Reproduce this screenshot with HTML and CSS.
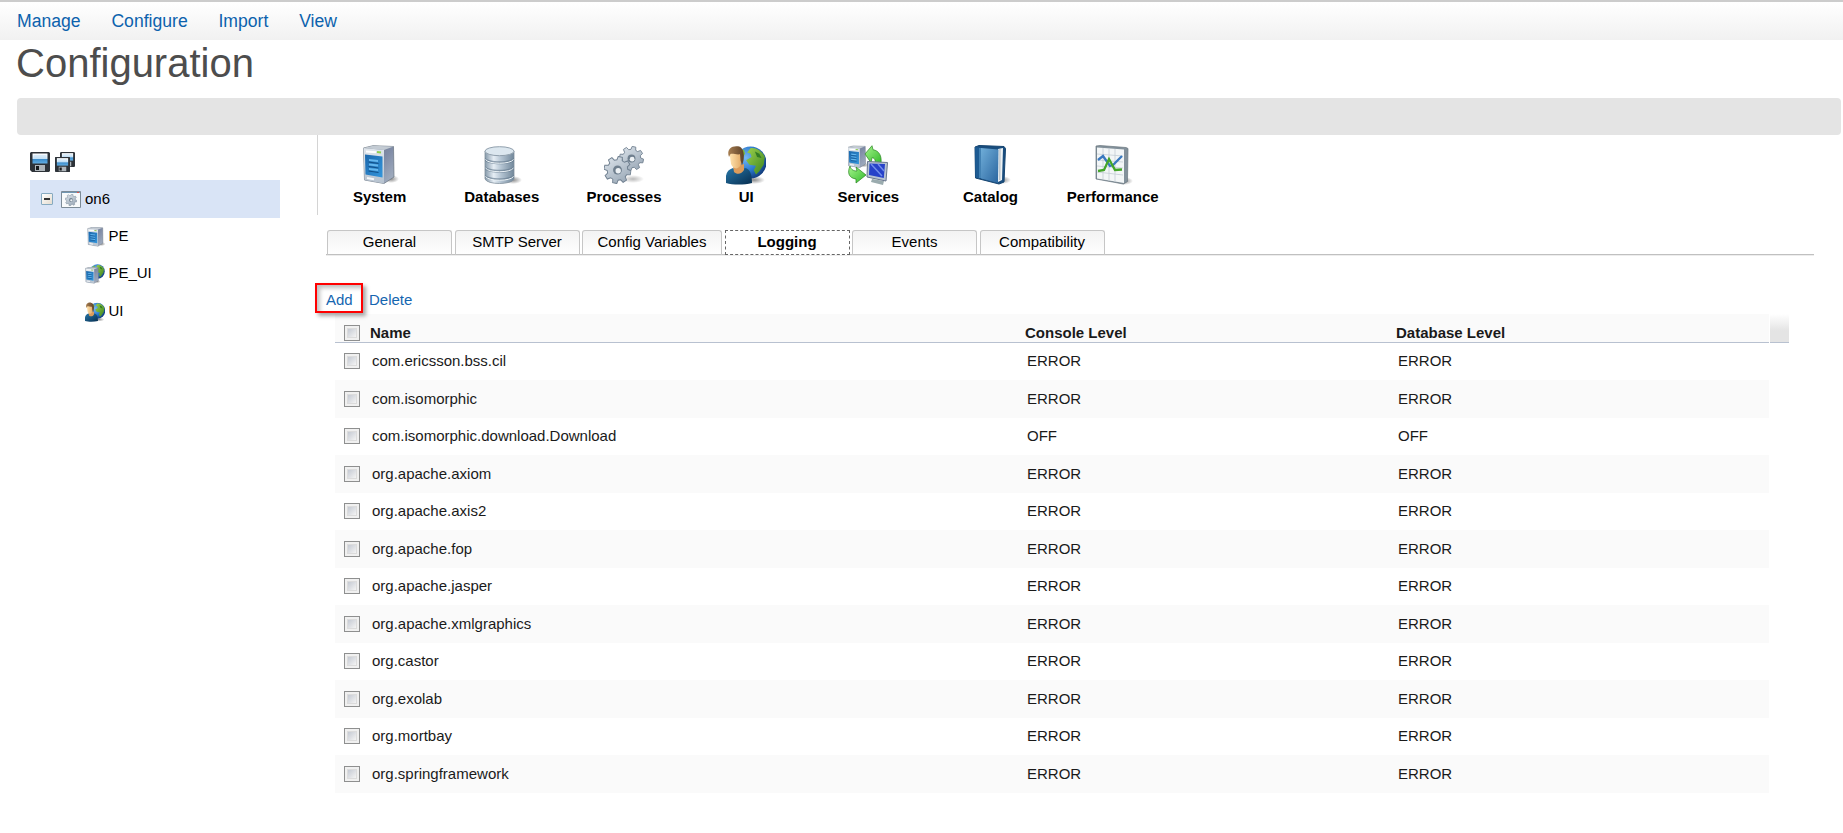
FILE: index.html
```html
<!DOCTYPE html>
<html lang="en">
<head>
<meta charset="utf-8">
<title>Configuration</title>
<link rel="stylesheet" href="styles.css">
</head>
<body>
<svg class="defs" width="0" height="0" aria-hidden="true">
  <defs>
    <linearGradient id="gSide" x1="0" y1="0" x2="1" y2="1"><stop offset="0" stop-color="#6d7887"/><stop offset=".5" stop-color="#7f8ba6"/><stop offset="1" stop-color="#a8b4c4"/></linearGradient>
    <linearGradient id="gFront" x1="0" y1="0" x2="0" y2="1"><stop offset="0" stop-color="#e0e6ec"/><stop offset="1" stop-color="#b6c2cf"/></linearGradient>
    <linearGradient id="gBlue" x1="0" y1="0" x2="1" y2="1"><stop offset="0" stop-color="#1a67ac"/><stop offset="1" stop-color="#3496dc"/></linearGradient>
    <linearGradient id="gDb" x1="0" y1="0" x2="1" y2="0"><stop offset="0" stop-color="#8599aa"/><stop offset=".3" stop-color="#e6eef5"/><stop offset=".55" stop-color="#b5c5d3"/><stop offset="1" stop-color="#71879a"/></linearGradient>
    <linearGradient id="gGear" x1="0" y1="0" x2="1" y2="1"><stop offset="0" stop-color="#dfe6ed"/><stop offset="1" stop-color="#93a2b1"/></linearGradient>
    <radialGradient id="gGlobe" cx=".35" cy=".35" r=".7"><stop offset="0" stop-color="#78b9f4"/><stop offset=".6" stop-color="#2a78cc"/><stop offset="1" stop-color="#123d7d"/></radialGradient>
    <linearGradient id="gLeaf" x1="0" y1="0" x2="1" y2="1"><stop offset="0" stop-color="#9cd14b"/><stop offset="1" stop-color="#3c8420"/></linearGradient>
    <linearGradient id="gFace" x1="0" y1="0" x2="1" y2="0"><stop offset="0" stop-color="#ffe4b0"/><stop offset="1" stop-color="#e3a964"/></linearGradient>
    <linearGradient id="gHair" x1="0" y1="0" x2="1" y2="0"><stop offset="0" stop-color="#a67d50"/><stop offset="1" stop-color="#5d4128"/></linearGradient>
    <linearGradient id="gShirt" x1="0" y1="0" x2="1" y2="1"><stop offset="0" stop-color="#2877a8"/><stop offset="1" stop-color="#062e50"/></linearGradient>
    <linearGradient id="gBook" x1="0" y1="0" x2="1" y2="1"><stop offset="0" stop-color="#6fadd8"/><stop offset="1" stop-color="#2a659f"/></linearGradient>
    <linearGradient id="gArrow" x1="0" y1="0" x2="1" y2="1"><stop offset="0" stop-color="#a5f58c"/><stop offset="1" stop-color="#33b92a"/></linearGradient>
    <linearGradient id="gLabel" x1="0" y1="0" x2="0" y2="1"><stop offset="0" stop-color="#fff"/><stop offset=".55" stop-color="#c9e3f7"/><stop offset=".6" stop-color="#3d8dcb"/><stop offset="1" stop-color="#63aee3"/></linearGradient>
    <radialGradient id="gShade"><stop offset="0" stop-color="#000" stop-opacity=".45"/><stop offset="1" stop-color="#000" stop-opacity="0"/></radialGradient>

    <symbol id="server" viewBox="0 0 40 40">
      <ellipse cx="31" cy="34" rx="8" ry="4" fill="url(#gShade)"/>
      <path d="M3.500 3 13 .7 33.500 1.500 34 32 24 38.500 4.500 35Z" fill="url(#gSide)" stroke="#65717d" stroke-width=".7"/>
      <path d="M3.500 3 24 5 33.500 1.500 13 .7Z" fill="#c3cbd3"/>
      <path d="M3.500 3 24 5V38.500L4.500 35Z" fill="url(#gFront)"/>
      <path d="M5 9.500 22.500 11.500V32.500L5.500 29.500Z" fill="url(#gBlue)"/>
      <path d="M9 14 18 15v2L9 16M9 18.500l9 1v2l-9-1M9 23l9 1v2l-9-1" fill="#65b7ee"/>
      <path d="M8.500 17 18.500 18.500M8.500 21.500 18.500 23M8.500 26 18.500 27.500" stroke="#114f88"/>
      <path d="m6 6.500 10 .8" stroke="#fff" stroke-width="2"/><path d="m17 7 4 .4" stroke="#8fd050" stroke-width="2"/>
      <path d="M7 33l7 1.200" stroke="#f5f8fa" stroke-width="2"/>
    </symbol>
    <symbol id="database" viewBox="0 0 40 40">
      <ellipse cx="31" cy="35" rx="9" ry="4" fill="url(#gShade)"/>
      <path d="M3 6v28c2 6 27 6 29 0V6Z" fill="url(#gDb)" stroke="#81909d" stroke-width=".8"/>
      <path d="M3 12.500c3 5 26 5 29 0v3c-3 5-26 5-29 0ZM3 21c3 5 26 5 29 0v3c-3 5-26 5-29 0ZM3 29.500c3 5 26 5 29 0v2c-3 5-26 5-29 0Z" fill="#64798d" opacity=".65"/>
      <path d="M3.500 14.500c3 5 25 5 28 0M3.500 23c3 5 25 5 28 0M3.500 31.500c3 5 25 5 28 0" fill="none" stroke="#edf4f8" stroke-width="1"/>
      <ellipse cx="17.500" cy="6.200" rx="14.500" ry="4.500" fill="#dce7ef" stroke="#91a0ad"/>
    </symbol>
    <symbol id="gear" viewBox="-12 -12 24 24">
      <g fill="url(#gGear)" stroke="#6f7f8f" stroke-width=".8">
        <path d="M-2.300-8.500-1.800-11.500H1.800L2.300-8.500 4.400-7.700 6.900-9.400 9.400-6.900 7.700-4.400 8.500-2.300 11.500-1.800V1.800L8.500 2.300 7.700 4.400 9.400 6.900 6.900 9.400 4.400 7.700 2.300 8.500 1.800 11.500H-1.800L-2.300 8.500-4.400 7.700-6.900 9.400-9.400 6.900-7.700 4.400-8.500 2.300-11.500 1.800V-1.800L-8.500-2.300-7.700-4.400-9.400-6.900-6.900-9.400-4.400-7.700Z" transform="rotate(12)"/>
      </g>
      <circle r="3.800" fill="#6f7f8e"/><circle cx=".6" cy=".6" r="2.300" fill="#eef2f5"/>
    </symbol>
    <symbol id="gears" viewBox="0 0 40 40">
      <ellipse cx="29" cy="34" rx="11" ry="4" fill="url(#gShade)" opacity=".6"/>
      <use href="#gear" x="15" y="1" width="25" height="25"/>
      <use href="#gear" x="-.5" y="11" width="28" height="28"/>
    </symbol>
    <symbol id="globe" viewBox="0 0 30 30">
      <circle cx="15" cy="15" r="14.500" fill="url(#gGlobe)"/>
      <path d="M15 2c5-1 11 3 13 8l-1 7-4 6-3 3-2-4 2-4-6-1-3-4 5-3-1-3-3-1Z" fill="url(#gLeaf)"/>
      <path d="M3 7 9 3l1 4-3 5-4 1Z" fill="#7dbb3c"/>
      <path d="m19 5 4 2 2 4-4-1Z" fill="#327b25"/>
    </symbol>
    <symbol id="user" viewBox="0 0 40 40">
      <ellipse cx="28" cy="35" rx="11" ry="4" fill="url(#gShade)"/>
      <use href="#globe" x="8" y="1" width="33" height="33"/>
      <path d="M0 38c-1-9 1-13 7-15l6 4 6-4c5 1 7 6 7 15-8 2-19 2-26 0Z" fill="url(#gShirt)"/>
      <path d="m7 21 1 6c3 3 8 2 10-2v-6Z" fill="#dc9c5b"/>
      <path d="M3.500 8c1-7 12-8 12.500-1l-.5 11c-2 7-8 7-10.500 1Z" fill="url(#gFace)"/>
      <path d="M3 12C0 3 7 .5 12 1.300c7 1 7 13 4 19l-1.500-5-.500-6C10 10 7 8 4.500 9Z" fill="url(#gHair)"/>
    </symbol>
    <symbol id="serverglobe" viewBox="0 0 40 40">
      <use href="#globe" x="10" y="0" width="30" height="30"/>
      <use href="#server" x="-2" y="6" width="34" height="34"/>
    </symbol>
    <symbol id="services" viewBox="0 0 40 40">
      <use href="#server" x="-2" y="0" width="23" height="24"/>
      <path d="M17 9 24 .7l1 4c6 1 9 6 8 14h-6c1-4-1-6-3-6l-1 5Z" fill="url(#gArrow)" stroke="#27841e" stroke-width=".7"/>
      <path d="M2 21c1 4 4 5 7 5l-1-4 10 8-10 8v-4c-7-1-9-6-6-13Z" fill="url(#gArrow)" stroke="#27841e" stroke-width=".7"/>
      <path d="m24 34 12 2-1 4-12-3Z" fill="#9aabae"/><path d="M19.500 16.500 39.500 17.500 38 36 19 32Z" fill="#b7c3d3" stroke="#68768c"/>
      <path d="m21.500 18.500 15.500.4-1.200 14L21 30Z" fill="#2742c9"/><path d="m23 19 11 12M30 19l6 7" stroke="#718dea" stroke-width="1.500"/>
    </symbol>
    <symbol id="book" viewBox="-1 0 40 40">
      <ellipse cx="30" cy="35" rx="9" ry="4" fill="url(#gShade)"/>
      <path d="m3 2 4-1.500 25 1 1.500 2L32 37l-5 2-23.500-6Z" fill="#194d7e" stroke="#164571"/>
      <path d="m26 4 5-1-1 32-4 2Z" fill="#eef3f5"/><path d="m28 4-.2 31" stroke="#a7b0b8"/>
      <path d="M9 3 26.500 4.500 26 38 9 33.500Z" fill="url(#gBook)"/>
      <path d="m3 2 6 1v30.500l-5.500-1Z" fill="#1d5b93"/><path d="M8 3v30" stroke="#68a8d3"/>
    </symbol>
    <symbol id="chart" viewBox="0 0 40 40">
      <ellipse cx="31" cy="36" rx="9" ry="4" fill="url(#gShade)"/>
      <path d="m3 1 4-.5 26 2 2 1-.5 33-4 2.500L3 34Z" fill="#83919b" stroke="#68757e" stroke-width=".7"/>
      <path d="m4 2.500 27 2V38L4 33.500Z" fill="#f3f6f7"/>
      <path d="m10 3v31M16 3.500V36M22 4v33M4 9l26 2M4 15l26 2M4 21l26 2M4 27l26 3" stroke="#c3cdd4" stroke-width=".8"/>
      <path d="m5 15 5-4 7 10 3-1 9-9" fill="none" stroke="#3978bf" stroke-width="2.300"/>
      <path d="m5 26 6-1 5-11 6 11 7-.5" fill="none" stroke="#44a528" stroke-width="2.300"/>
    </symbol>
    <symbol id="disk" viewBox="0 0 20 20">
      <path d="M1 0h18l1 1v18l-1 1H2l-2-2V1Z" fill="#2d3238"/>
      <path d="M2.500 1.500h15v10h-15Z" fill="url(#gLabel)"/><path d="M4 4h12M4 6h12" stroke="#b6d9f2" stroke-width=".7"/>
      <path d="M5 13h10v6H5Z" fill="#aeb5ba"/><path d="M6 14h3v4H6Z" fill="#16191c"/>
    </symbol>
    <symbol id="disks" viewBox="0 0 20 20">
      <use href="#disk" x="5" y="0" width="15" height="15"/>
      <path d="M0 5h15v15H0Z" fill="#555b61"/><use href="#disk" x="0" y="5" width="15" height="15"/>
    </symbol>
    <symbol id="window" viewBox="0 0 20 17">
      <path d="M.5.500h19v16H.500Z" fill="#f8fafb" stroke="#7c8b97"/><path d="M1 1h18v1H1Z" fill="#7197b4"/><path d="M16 1h2v1h-2Z" fill="#d8524c"/>
      <use href="#gear" x="4" y="3" width="12" height="12"/>
    </symbol>
  </defs>
</svg>

<nav class="menu"><a>Manage</a><a>Configure</a><a>Import</a><a>View</a></nav>
<h1 class="title">Configuration</h1>
<div class="band"></div>

<div class="layout">
  <aside class="sidebar">
    <div class="savebar"><svg class="ico20"><use href="#disk"/></svg><svg class="ico20"><use href="#disks"/></svg></div>
    <div class="node root"><span class="toggle"></span><svg class="winico"><use href="#window"/></svg><span>on6</span></div>
    <div class="node child"><svg class="ico20 shifted"><use href="#server"/></svg><span>PE</span></div>
    <div class="node child"><svg class="ico20"><use href="#serverglobe"/></svg><span>PE_UI</span></div>
    <div class="node child"><svg class="ico20"><use href="#user"/></svg><span>UI</span></div>
  </aside>
  <main class="content">
    <div class="sections">
      <div class="section"><svg><use href="#server"/></svg>System</div>
      <div class="section"><svg><use href="#database"/></svg>Databases</div>
      <div class="section"><svg><use href="#gears"/></svg>Processes</div>
      <div class="section"><svg><use href="#user"/></svg>UI</div>
      <div class="section"><svg><use href="#services"/></svg>Services</div>
      <div class="section"><svg><use href="#book"/></svg>Catalog</div>
      <div class="section"><svg><use href="#chart"/></svg>Performance</div>
    </div>
    <div class="tabs">
      <div class="tab">General</div><div class="tab">SMTP Server</div><div class="tab wide">Config Variables</div><div class="tab active">Logging</div><div class="tab">Events</div><div class="tab">Compatibility</div>
    </div>
    <div class="actions"><a class="marked">Add</a><a>Delete</a></div>
    <div class="grid">
      <div class="table">
        <div class="row head"><i class="check"></i><span>Name</span><span>Console Level</span><span>Database Level</span></div>
        <div class="row"><i class="check"></i><span>com.ericsson.bss.cil</span><span>ERROR</span><span>ERROR</span></div>
        <div class="row"><i class="check"></i><span>com.isomorphic</span><span>ERROR</span><span>ERROR</span></div>
        <div class="row"><i class="check"></i><span>com.isomorphic.download.Download</span><span>OFF</span><span>OFF</span></div>
        <div class="row"><i class="check"></i><span>org.apache.axiom</span><span>ERROR</span><span>ERROR</span></div>
        <div class="row"><i class="check"></i><span>org.apache.axis2</span><span>ERROR</span><span>ERROR</span></div>
        <div class="row"><i class="check"></i><span>org.apache.fop</span><span>ERROR</span><span>ERROR</span></div>
        <div class="row"><i class="check"></i><span>org.apache.jasper</span><span>ERROR</span><span>ERROR</span></div>
        <div class="row"><i class="check"></i><span>org.apache.xmlgraphics</span><span>ERROR</span><span>ERROR</span></div>
        <div class="row"><i class="check"></i><span>org.castor</span><span>ERROR</span><span>ERROR</span></div>
        <div class="row"><i class="check"></i><span>org.exolab</span><span>ERROR</span><span>ERROR</span></div>
        <div class="row"><i class="check"></i><span>org.mortbay</span><span>ERROR</span><span>ERROR</span></div>
        <div class="row"><i class="check"></i><span>org.springframework</span><span>ERROR</span><span>ERROR</span></div>
      </div>
      <div class="corner"></div>
    </div>
  </main>
</div>
</body>
</html>
```
FILE: styles.css
```css
* { box-sizing: border-box; }
body { margin: 0; background: #fff; color: #000; font: 15px/18px "Liberation Sans", Arial, sans-serif; }
.defs { display: block; }
svg { display: block; flex: none; }

.menu { display: flex; gap: 30.800px; height: 40px; padding: 9px 17px 0; border-top: 2px solid #ccc; background: linear-gradient(#fff, #f1f1f1); color: #0c62ad; font-size: 17.600px; line-height: 20px; }
.title { margin: 0; padding-left: 16px; height: 58px; color: #4d4d4d; font-size: 40px; font-weight: 400; line-height: 46px; }
.band { height: 37px; margin: 0 2px 0 17px; border-radius: 4px; background: #e4e4e4; }

.layout { display: flex; }
.sidebar { width: 317px; padding: 17px 37px 0 30px; flex: none; }
.savebar { display: flex; gap: 5px; height: 28px; }
.ico20 { width: 20px; height: 20px; }
.shifted { margin: 0 -1px 0 1px; }
.node { display: flex; align-items: center; height: 37.500px; }
.root { height: 38px; padding: 0 0 0 11px; background: #d9e4f6; }
.toggle { width: 12px; height: 12px; margin-right: 8px; border: 1px solid #86aac0; border-radius: 1px; background: linear-gradient(#333, #333) center / 6px 2px no-repeat, linear-gradient(135deg, #fff, #e4dccf); }
.winico { width: 20px; height: 17px; margin-right: 4px; }
.child { padding-left: 55px; gap: 3.400px; }
.child span { margin-bottom: 2px; }

.content { flex: 1; min-width: 0; }
.sections { display: flex; height: 80px; padding: 10px 0 0 .5px; border-left: 1px solid #d4d4d4; }
.section { display: flex; flex-direction: column; align-items: center; width: 122.200px; font-weight: 700; line-height: 18px; gap: 3px; }
.section svg { width: 40px; height: 40px; }

.tabs { display: flex; gap: 2.500px; height: 25px; margin: 15px 29px 28px 9px; border-bottom: 1px solid #c0c0c0; box-shadow: 0 1px #ededed; padding-left: 1px; }
.tab { width: 125px; height: 25px; border: 1px solid #c6c6c6; border-width: 1px 1px 0; border-radius: 3px 3px 0 0; background: linear-gradient(#f3f3f3, #fff); text-align: center; line-height: 21px; box-shadow: inset 0 -1px #c0c0c0; }
.wide { width: 140px; }
.active { border: 1px dashed #666; border-radius: 0; background: #fff; box-shadow: none; font-weight: 700; }

.actions { display: flex; gap: 6px; height: 31px; margin-left: -2px; color: #1566b0; line-height: 33px; }
.marked { width: 48px; height: 30px; padding-left: 9px; border: 2px solid #f00; box-shadow: 3px 3px 4px rgba(0,0,0,.35), inset 3px 3px 4px rgba(0,0,0,.25); line-height: 29px; position: relative; z-index: 1; }
.grid { display: flex; gap: 1px; margin-left: 18px; }
.table { width: 1434px; }
.row { display: grid; grid-template-columns: 28px 655px 371px 1fr; align-items: center; height: 37.500px; padding-left: 9px; color: #1a1a1a; }
.row:nth-child(odd) { background: #fafafa; }
.head { height: 29px; margin-bottom: -.5px; border-bottom: 1px solid #b8c1d0; font-weight: 700; }
.head > span { margin: 10px 0 0 -2px; }
.head .check { margin-top: 9px; }
.check { width: 16px; height: 16px; border: 1px solid #8e8f8f; background: linear-gradient(135deg, #c5cad3, #f4f4f4) center / 8px 8px no-repeat, linear-gradient(#dcdcdc, #dcdcdc) center / 10px 10px no-repeat #f0f0f0; }
.corner { width: 19px; height: 29px; border-bottom: 1px solid #b8c1d0; background: linear-gradient(#fff, #e4e4e4 60%); }
```
